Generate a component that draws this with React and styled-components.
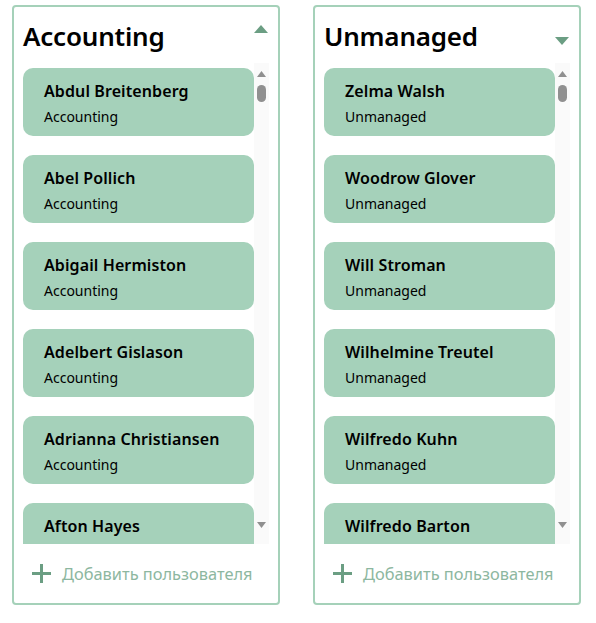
import styled, { createGlobalStyle } from "styled-components";

const GlobalStyle = createGlobalStyle`
  html, body {
    margin: 0;
    padding: 0;
    background: #ffffff;
  }
  body {
    font-family: "Noto Sans", "Open Sans", sans-serif;
    color: #000;
  }
`;

const accounting = [
  "Abdul Breitenberg", "Abel Pollich", "Abigail Hermiston", "Adelbert Gislason",
  "Adrianna Christiansen", "Afton Hayes",
];

const unmanaged = [
  "Zelma Walsh", "Woodrow Glover", "Will Stroman", "Wilhelmine Treutel",
  "Wilfredo Kuhn", "Wilfredo Barton",
];

const Board = styled.main`
  display: flex;
  align-items: flex-start;
  gap: 33px;
  padding: 5px 0 0 12px;
`;

const Panel = styled.section`
  box-sizing: border-box;
  width: 268px;
  height: 600px;
  border: 2px solid #a5d1b9;
  border-radius: 4px;
  padding: 0 9px;
  display: flex;
  flex-direction: column;
`;

const Header = styled.header`
  display: flex;
  justify-content: space-between;
  align-items: flex-start;
  padding-top: 10px;
  height: 46px;
`;

const Title = styled.h2`
  margin: 0;
  font-size: 26px;
  line-height: 38px;
  font-weight: 600;
  letter-spacing: -0.2px;
`;

const Toggle = styled.button`
  border: 0;
  background: none;
  padding: 0;
  margin-top: ${(p) => p.$offset}px;
  margin-right: 1px;
  width: 14px;
  height: 8px;
  display: flex;
  cursor: pointer;
`;

const ListArea = styled.div`
  flex: 1;
  min-height: 0;
  display: flex;
`;

const Viewport = styled.div`
  flex: 1;
  min-width: 0;
  overflow: hidden;
  padding-top: 5px;
`;

const Rail = styled.div`
  width: 15px;
  flex: none;
  background: #fafafa;
  display: flex;
  flex-direction: column;
  align-items: center;
`;

const RailButton = styled.div`
  height: 17px;
  width: 100%;
  display: flex;
  justify-content: center;
  align-items: ${(p) => (p.$up ? "flex-end" : "flex-start")};
  padding: ${(p) => (p.$up ? "0 0 3px" : "2px 0 0")};
  box-sizing: border-box;
  margin-top: ${(p) => (p.$up ? "0" : "auto")};
  margin-bottom: ${(p) => (p.$up ? "0" : "7px")};
`;

const Thumb = styled.div`
  width: 9px;
  height: 17px;
  margin-top: 5px;
  border-radius: 5px;
  background: #909090;
`;

const Card = styled.article`
  background: #a5d1ba;
  border-radius: 10px;
  height: 68px;
  box-sizing: border-box;
  padding: 11px 21px 0;
  margin-bottom: 19px;
`;

const Name = styled.div`
  font-size: 16px;
  font-weight: 600;
  line-height: 24px;
  letter-spacing: 0.1px;
  white-space: nowrap;
`;

const Dept = styled.div`
  font-size: 14px;
  line-height: 22px;
  margin-top: 3px;
`;

const Footer = styled.button`
  display: flex;
  align-items: center;
  gap: 11px;
  height: 59px;
  border: 0;
  background: none;
  padding: 0 0 0 9px;
  font-family: inherit;
  font-size: 16.4px;
  color: #8db7a0;
  cursor: pointer;
`;

const Caret = ({ up }) => (
  <svg width="14" height="8" viewBox="0 0 14 8">
    <path d={up ? "M0 8 L7 0 L14 8 Z" : "M0 0 L14 0 L7 8 Z"} fill="#6b9e83" />
  </svg>
);

const RailArrow = ({ up }) => (
  <svg width="9" height="6" viewBox="0 0 9 6">
    <path d={up ? "M0 6 L4.5 0 L9 6 Z" : "M0 0 L9 0 L4.5 6 Z"} fill="#909090" />
  </svg>
);

const Plus = () => (
  <svg width="19" height="19" viewBox="0 0 19 19">
    <path d="M9.5 0 V19 M0 9.5 H19" stroke="#6b9e83" strokeWidth="3" />
  </svg>
);

const Column = ({ title, users, open }) => (
  <Panel>
    <Header>
      <Title>{title}</Title>
      <Toggle $offset={open ? 8 : 20}>
        <Caret up={open} />
      </Toggle>
    </Header>
    <ListArea>
      <Viewport>
        {users.map((u) => (
          <Card key={u}>
            <Name>{u}</Name>
            <Dept>{title}</Dept>
          </Card>
        ))}
      </Viewport>
      <Rail>
        <RailButton $up>
          <RailArrow up />
        </RailButton>
        <Thumb />
        <RailButton>
          <RailArrow />
        </RailButton>
      </Rail>
    </ListArea>
    <Footer>
      <Plus />
      Добавить пользователя
    </Footer>
  </Panel>
);

export default function App() {
  return (
    <>
      <GlobalStyle />
      <Board>
        <Column title="Accounting" users={accounting} open />
        <Column title="Unmanaged" users={unmanaged} />
      </Board>
    </>
  );
}
